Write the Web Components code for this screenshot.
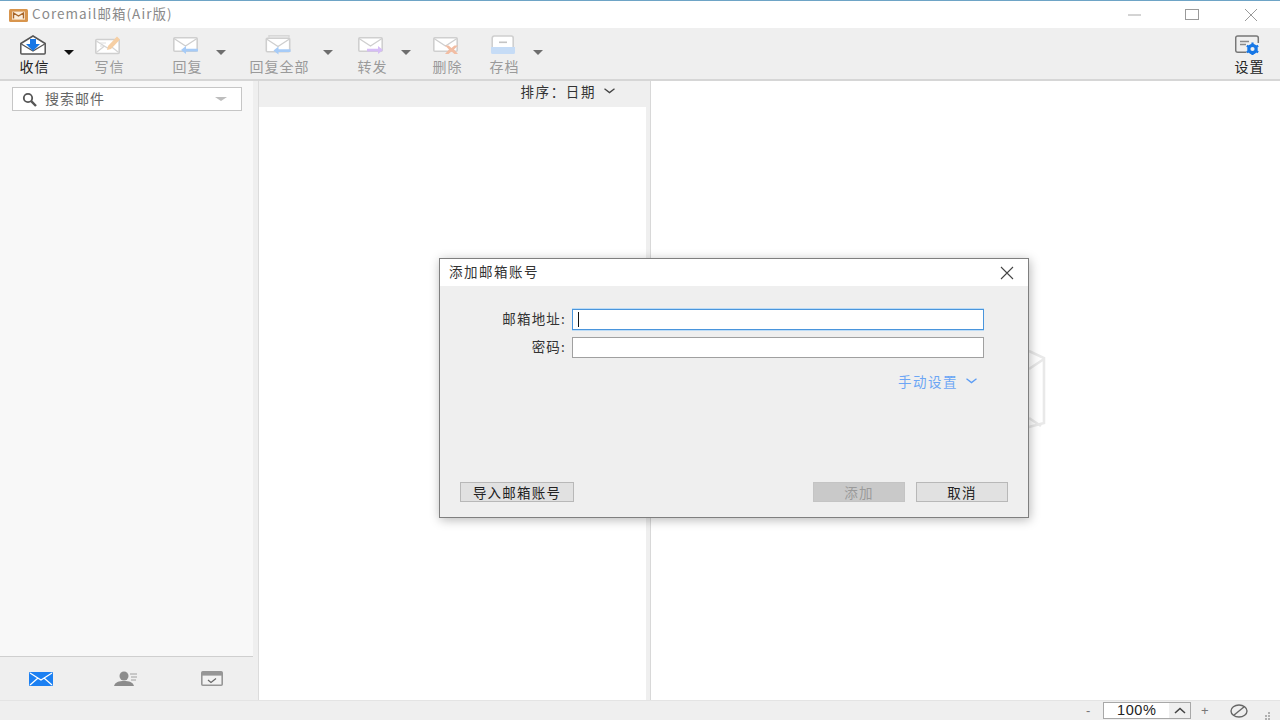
<!DOCTYPE html>
<html lang="zh-CN">
<head>
<meta charset="utf-8">
<title>Coremail邮箱(Air版)</title>
<style>
  html, body { margin: 0; padding: 0; height: 100%; overflow: hidden; background: #fff; }
  body { font-family: "Noto Sans CJK SC", "Liberation Sans", sans-serif; }
</style>
</head>
<body>
<app-window>
  <title-bar slot="title"></title-bar>
  <mail-toolbar slot="toolbar">
    <tool-btn icon="inbox" label="收信" style="margin-left:10px" active></tool-btn>
    <tool-caret style="margin-left:4px" active></tool-caret>
    <tool-btn icon="compose" label="写信" style="margin-left:9px"></tool-btn>
    <tool-btn icon="reply" label="回复" style="margin-left:30px"></tool-btn>
    <tool-caret style="margin-left:3px"></tool-caret>
    <tool-btn icon="replyall" label="回复全部" style="margin-left:19px;width:64px"></tool-btn>
    <tool-caret style="margin-left:10px"></tool-caret>
    <tool-btn icon="forward" label="转发" style="margin-left:13px"></tool-btn>
    <tool-caret style="margin-left:3px"></tool-caret>
    <tool-btn icon="trash" label="删除" style="margin-left:10px"></tool-btn>
    <tool-btn icon="archive" label="存档" style="margin-left:9px"></tool-btn>
    <tool-caret style="margin-left:3px"></tool-caret>
    <tool-btn icon="settings" label="设置" style="margin-left:auto;margin-right:7px" active></tool-btn>
  </mail-toolbar>
  <folder-nav slot="nav"></folder-nav>
  <message-list slot="list"></message-list>
  <reading-pane slot="pane"></reading-pane>
  <status-bar slot="status"></status-bar>
  <account-dialog slot="dialog"></account-dialog>
</app-window>

<script>
const CHEVRON = (w, h, color) => `<svg width="${w}" height="${h}" viewBox="0 0 11 6" fill="none" stroke="${color}" stroke-width="1.3"><path d="M.5 .8 5.5 4.6 10.5 .8"/></svg>`;

const ENVELOPE = `<rect x=".8" y="2.8" width="23.4" height="13.5" rx="1" fill="#fff" stroke="#cfcfcf" stroke-width="1.6"/><path d="M1 3.5 12.5 11 24 3.5" fill="none" stroke="#cfcfcf" stroke-width="1.4"/>`;
const REPLY_ARROW = `<path d="M8 15 13 11V13.7H25V16.5H13V19z" fill="#a6cbf7"/>`;

// toolbar icons, 28x20
const ICONS = {
  inbox: `<path d="M.8 8.5 13 1 25.2 8.5V18a1 1 0 0 1-1 1H1.8a1 1 0 0 1-1-1z" fill="#fff" stroke="#555" stroke-width="1.5"/><path d="M1.3 9 13 16 24.7 9" fill="none" stroke="#555" stroke-width="1.2"/><path d="M10 4h6v5h4l-7 7-7-7h4z" fill="#1677e6"/>`,
  compose: `<rect x=".8" y="4.5" width="23.4" height="14" rx="1" fill="#fff" stroke="#cfcfcf" stroke-width="1.6"/><path d="M1.3 17.5 9.5 11M23.7 17.5 15.5 11M1.3 6 12.5 13 18 9.5" fill="none" stroke="#d5d5d5" stroke-width="1.3"/><path d="M5 8h6M5 11h3" stroke="#ddd" stroke-width="1.2"/><path d="M13 11 22 1.5l3 3-9 9.5-4 1z" fill="#f6cfa4"/>`,
  reply: `${ENVELOPE}${REPLY_ARROW}`,
  replyall: `<path d="M4 2.5V.8H24V2.5" fill="none" stroke="#d8d8d8" stroke-width="1.4"/><g transform="translate(.5 .5)">${ENVELOPE}${REPLY_ARROW}</g>`,
  forward: `${ENVELOPE}<path d="M25 15 20 11V13.7H9V16.5H20V19z" fill="#d6bdf6"/>`,
  trash: `${ENVELOPE}<path d="M12 10.5h3.5l3 2.5 3-2.5H25l-4 4 4 4.5h-3.5l-3-2.5-3 2.5H12l4-4.5z" fill="#f2bda3"/>`,
  archive: `<path d="M2.2 12V3a2 2 0 0 1 2-2h17a2 2 0 0 1 2 2v9" fill="#fff" stroke="#cfcfcf" stroke-width="1.6"/><path d="M1 12H25V17.5a1.5 1.5 0 0 1-1.5 1.5H2.5A1.5 1.5 0 0 1 1 17.5z" fill="#c6dcf6"/><rect x="9" y="6.5" width="8" height="1.6" fill="#c4c4c4"/>`,
  settings: `<path d="M11.5 17.2H2.7a2 2 0 0 1-2-2V3a2 2 0 0 1 2-2h18.6a2 2 0 0 1 2 2v5" fill="none" stroke="#777" stroke-width="1.5"/><path d="M5 6.5h9M5 9.5h6" stroke="#8a8a8a" stroke-width="1.3"/><circle cx="17.5" cy="14" r="3.7" fill="none" stroke="#1677e6" stroke-width="3.2"/><path d="M17.5 7.5v2M17.5 18.5v2M11.8 10.7l1.8 1M21.4 16.3l1.8 1M11.8 17.3l1.8-1M21.4 11.7l1.8-1" stroke="#1677e6" stroke-width="2.2"/>`
};

class AppWindow extends HTMLElement {
  constructor() {
    super();
    this.attachShadow({ mode: 'open' });
    this.shadowRoot.innerHTML = `
      <style>
        :host { display: flex; flex-direction: column; position: relative; width: 1280px; height: 720px; overflow: hidden; background: #fff; }
        .main { flex: 1; display: flex; min-height: 0; }
      </style>
      <slot name="title"></slot>
      <slot name="toolbar"></slot>
      <div class="main">
        <slot name="nav"></slot>
        <slot name="list"></slot>
        <slot name="pane"></slot>
      </div>
      <slot name="status"></slot>
      <slot name="dialog"></slot>
    `;
  }
}

class TitleBar extends HTMLElement {
  constructor() {
    super();
    this.attachShadow({ mode: 'open' });
    this.shadowRoot.innerHTML = `
      <style>
        :host { display: flex; align-items: center; height: 27px; background: #fff; border-top: 1px solid #6ea4c6; padding-left: 9px; }
        .logo { width: 19px; height: 13px; margin-right: 4px; margin-top: 1px; }
        .name { font-size: 13.5px; letter-spacing: 1.05px; color: #8a8a8a; white-space: nowrap; margin-top: -3px; }
        .controls { margin-left: auto; display: flex; align-items: center; }
        .controls svg { display: block; }
      </style>
      <svg class="logo" viewBox="0 0 19 13"><rect width="19" height="13" rx="1.5" fill="#d8954d"/><rect x="3" y="2.6" width="13" height="8" fill="#fbeedd"/><path d="M4.5 9.5V4l5 3 5-3v5.5" fill="none" stroke="#a8662a" stroke-width="1.4"/></svg>
      <span class="name">Coremail邮箱(Air版)</span>
      <div class="controls">
        <svg width="16" height="16" viewBox="0 0 16 16" style="margin-right:42px"><path d="M1 8H14" stroke="#a8a8a8"/></svg>
        <svg width="14" height="14" viewBox="0 0 14 14" style="margin-right:45px"><rect x=".5" y="1.5" width="13" height="10" fill="none" stroke="#9a9a9a"/></svg>
        <svg width="14" height="14" viewBox="0 0 14 14" style="margin-right:22px"><path d="M1 1 13 13M13 1 1 13" stroke="#9a9a9a"/></svg>
      </div>
    `;
  }
}

class MailToolbar extends HTMLElement {
  constructor() {
    super();
    this.attachShadow({ mode: 'open' });
    this.shadowRoot.innerHTML = `
      <style>
        :host { display: flex; align-items: flex-start; height: 51px; background: #efefef; border-bottom: 2px solid #d6d6d6; box-sizing: content-box; }
      </style>
      <slot></slot>
    `;
  }
}

class ToolBtn extends HTMLElement {
  connectedCallback() {
    if (this.shadowRoot) return;
    this.attachShadow({ mode: 'open' });
    const label = this.getAttribute('label');
    const icon = ICONS[this.getAttribute('icon')];
    this.shadowRoot.innerHTML = `
      <style>
        :host { display: flex; flex-direction: column; align-items: center; width: 48px; padding-top: 7px; flex: none; }
        svg { display: block; width: 28px; height: 20px; }
        .label { margin-top: 2px; padding-left: 1px; font-size: 14px; letter-spacing: 1px; line-height: 18px; color: #9a9a9a; white-space: nowrap; }
        :host([active]) .label { color: #222; }
      </style>
      <svg viewBox="0 0 28 20">${icon}</svg>
      <span class="label">${label}</span>
    `;
  }
}

class ToolCaret extends HTMLElement {
  constructor() {
    super();
    this.attachShadow({ mode: 'open' });
    this.shadowRoot.innerHTML = `
      <style>
        :host { display: block; flex: none; width: 14px; height: 5px; margin-top: 22px; }
        i { display: block; width: 0; margin: 0 auto; border: 5px solid transparent; border-top: 5px solid #6e6e6e; border-bottom: 0; }
        :host([active]) i { border-top-color: #111; }
      </style>
      <i></i>
    `;
  }
}

class SearchBox extends HTMLElement {
  constructor() {
    super();
    this.attachShadow({ mode: 'open' });
    this.shadowRoot.innerHTML = `
      <style>
        :host { display: flex; align-items: center; height: 22px; background: #fff; border: 1px solid #c6c6c6; padding: 0 14px 0 9px; }
        svg { flex: none; }
        span { margin-left: 8px; margin-top: -2px; font-size: 14px; letter-spacing: 1px; color: #666; white-space: nowrap; }
        i { margin-left: auto; border: 6px solid transparent; border-top: 4px solid #bdbdbd; border-bottom: 0; }
      </style>
      <svg width="15" height="15" viewBox="0 0 15 15" fill="none" stroke="#555"><circle cx="6" cy="6" r="4.2" stroke-width="1.8"/><path d="M9.2 9.2 14 14" stroke-width="2.4"/></svg>
      <span>搜索邮件</span>
      <i></i>
    `;
  }
}

class FolderNav extends HTMLElement {
  constructor() {
    super();
    this.attachShadow({ mode: 'open' });
    this.shadowRoot.innerHTML = `
      <style>
        :host { display: flex; flex-direction: column; width: 253px; background: #f8f8f8; border-right: 5px solid #efefef; box-sizing: content-box; flex: none; }
        .top { flex: 1; padding: 6px 11px 0 12px; }
        .tabs { height: 43px; display: flex; align-items: center; background: #efefef; border-top: 1px solid #cfcfcf; }
        .tab { flex: none; display: flex; justify-content: center; }
      </style>
      <div class="top"><search-box></search-box></div>
      <div class="tabs">
        <div class="tab" style="width:82px">
          <svg width="24" height="14" viewBox="0 0 24 14"><rect width="24" height="14" rx="1" fill="#1c80f2"/><path d="M1 1 12 8 23 1M1 13 9 6M23 13 15 6" fill="none" stroke="#fff" stroke-width="1.2"/></svg>
        </div>
        <div class="tab" style="width:88px">
          <svg width="24" height="16" viewBox="0 0 24 16"><circle cx="10" cy="5" r="4.5" fill="#8c8c8c"/><path d="M0 15c1-4 5-5 10-5s9 1 10 5z" fill="#8c8c8c"/><path d="M16 3h7M17 6h6M17 9h5" stroke="#a0a0a0"/></svg>
        </div>
        <div class="tab" style="width:84px">
          <svg width="22" height="15" viewBox="0 0 22 15"><rect x=".8" y=".8" width="20.4" height="13.4" rx="1" fill="#f2f2f2" stroke="#969696" stroke-width="1.6"/><rect x="1" y="1" width="20" height="3.6" fill="#969696"/><path d="M7 9 10 11.5 15 7.5" fill="none" stroke="#666" stroke-width="1.2"/></svg>
        </div>
      </div>
    `;
  }
}

class MessageList extends HTMLElement {
  constructor() {
    super();
    this.attachShadow({ mode: 'open' });
    this.shadowRoot.innerHTML = `
      <style>
        :host { display: flex; flex-direction: column; width: 393px; flex: none; background: #efefef; border-left: 1px solid #dcdcdc; box-sizing: border-box; border-right: 1px solid #d8d8d8; }
        .sort { height: 20px; padding-bottom: 6px; display: flex; align-items: center; justify-content: flex-end; padding-right: 35px; font-size: 13.5px; letter-spacing: 1.6px; color: #333; white-space: nowrap; }
        .sort svg { margin-left: 8px; }
        .body { flex: 1; background: #fff; margin-right: 4px; }
      </style>
      <div class="sort">排序：日期${CHEVRON(11, 6, '#444')}</div>
      <div class="body"></div>
    `;
  }
}

class ReadingPane extends HTMLElement {
  constructor() {
    super();
    this.attachShadow({ mode: 'open' });
    this.shadowRoot.innerHTML = `
      <style>
        :host { display: flex; flex: 1; align-items: center; justify-content: center; background: #fff; }
      </style>
      <svg width="160" height="82" viewBox="0 0 160 82" fill="none" stroke="#e9e9e9" stroke-width="2.6">
        <path d="M17 1 2 8V73L17 77H143L158 73V8L143 1z"/>
        <path d="M158 9 143 19M143 68 155 76M2 9 17 19M17 68 5 76"/>
      </svg>
    `;
  }
}

class StatusBar extends HTMLElement {
  constructor() {
    super();
    this.attachShadow({ mode: 'open' });
    this.shadowRoot.innerHTML = `
      <style>
        :host { display: flex; align-items: center; height: 19px; background: #efefef; border-top: 1px solid #e4e4e4; font-family: "Liberation Sans", sans-serif; color: #555; }
        .minus { margin-left: 1086px; width: 6px; font-size: 13px; color: #777; }
        .zoom { margin-left: 11px; width: 86px; height: 15px; display: flex; background: #fff; border: 1px solid #a8a8a8; }
        .val { width: 65px; padding-left: 13px; box-sizing: border-box; font-size: 14.5px; line-height: 15px; letter-spacing: .6px; color: #222; }
        .up { flex: 1; background: #efefef; display: flex; align-items: center; justify-content: center; }
        .plus { margin-left: 10px; font-size: 13px; color: #777; width: 8px; }
        .block { margin-left: 21px; display: block; }
        .grip { margin-left: 15px; display: block; align-self: flex-end; }
      </style>
      <span class="minus">-</span>
      <div class="zoom">
        <div class="val">100%</div>
        <div class="up"><svg width="12" height="7" viewBox="0 0 12 7" fill="none" stroke="#444" stroke-width="1.6"><path d="M1 6 6 1.5 11 6"/></svg></div>
      </div>
      <span class="plus">+</span>
      <svg class="block" width="18" height="14" viewBox="0 0 18 14" fill="none" stroke="#666" stroke-width="1.4"><ellipse cx="9" cy="7" rx="8" ry="6"/><path d="M3.5 11.5 14.5 2.5"/></svg>
      <svg class="grip" width="8" height="9" viewBox="0 0 8 9" fill="#b0b0b0"><rect x="5" y="1" width="2" height="2"/><rect x="5" y="4" width="2" height="2"/><rect x="5" y="7" width="2" height="2"/><rect x="2" y="4" width="2" height="2"/><rect x="2" y="7" width="2" height="2"/></svg>
    `;
  }
}

class DialogField extends HTMLElement {
  connectedCallback() {
    if (this.shadowRoot) return;
    this.attachShadow({ mode: 'open' });
    this.shadowRoot.innerHTML = `
      <style>
        :host { display: flex; align-items: center; height: 21px; }
        label { width: 126px; margin-top: -3px; text-align: right; font-size: 13.5px; letter-spacing: 1.2px; color: #333; white-space: nowrap; }
        .box { margin-left: 6px; width: 405px; height: 19px; background: #fff; border: 1px solid #a0a0a0; display: flex; align-items: center; padding-left: 5px; box-sizing: content-box; }
        :host([focused]) .box { border-color: #4a95dc; box-shadow: 0 -1px 0 #bcdcf7, 0 1px 0 #bcdcf7; }
        .caret { display: none; width: 1px; height: 15px; background: #111; }
        :host([focused]) .caret { display: block; }
      </style>
      <label>${this.getAttribute('label')}</label>
      <div class="box"><i class="caret"></i></div>
    `;
  }
}

class AccountDialog extends HTMLElement {
  constructor() {
    super();
    this.attachShadow({ mode: 'open' });
    this.shadowRoot.innerHTML = `
      <style>
        :host { position: absolute; left: 439px; top: 258px; width: 588px; height: 258px; display: flex; flex-direction: column; background: #efefef; border: 1px solid #7f7f7f; box-shadow: 1px 2px 10px rgba(0,0,0,.28); }
        .head { flex: none; height: 27px; background: #fff; display: flex; align-items: center; justify-content: space-between; padding: 0 14px 0 9px; }
        .head span { font-size: 13.5px; letter-spacing: 1.5px; color: #333; white-space: nowrap; margin-top: -3px; }
        .body { flex: 1; display: flex; flex-direction: column; padding-top: 23px; }
        .fields { display: flex; flex-direction: column; gap: 7px; }
        .manual { display: flex; align-items: center; justify-content: flex-end; margin-top: 13px; padding-right: 51px; font-size: 13.5px; letter-spacing: 1.5px; color: #6ca6f5; white-space: nowrap; }
        .manual svg { margin-left: 8px; }
        .foot { margin-top: auto; display: flex; padding: 0 20px 15px 20px; }
        button { font: inherit; font-size: 13.5px; letter-spacing: 1.2px; height: 17px; padding: 0 0 1px; box-sizing: content-box; border: 1px solid #b8b8b8; background: #e1e1e1; color: #222; display: flex; align-items: center; justify-content: center; white-space: nowrap; }
        .import { width: 112px; }
        .add { margin-left: auto; width: 90px; background: #c9c9c9; border-color: #c4c4c4; color: #9a9a9a; }
        .cancel { margin-left: 11px; width: 90px; }
      </style>
      <div class="head">
        <span>添加邮箱账号</span>
        <svg width="14" height="14" viewBox="0 0 14 14"><path d="M1 1 13 13M13 1 1 13" stroke="#444" stroke-width="1.1"/></svg>
      </div>
      <div class="body">
        <div class="fields">
          <dialog-field label="邮箱地址:" focused></dialog-field>
          <dialog-field label="密码:"></dialog-field>
        </div>
        <div class="manual">手动设置${CHEVRON(11, 6, '#5b9cf5')}</div>
        <div class="foot">
          <button class="import">导入邮箱账号</button>
          <button class="add">添加</button>
          <button class="cancel">取消</button>
        </div>
      </div>
    `;
  }
}

customElements.define('tool-btn', ToolBtn);
customElements.define('tool-caret', ToolCaret);
customElements.define('mail-toolbar', MailToolbar);
customElements.define('title-bar', TitleBar);
customElements.define('search-box', SearchBox);
customElements.define('folder-nav', FolderNav);
customElements.define('message-list', MessageList);
customElements.define('reading-pane', ReadingPane);
customElements.define('status-bar', StatusBar);
customElements.define('dialog-field', DialogField);
customElements.define('account-dialog', AccountDialog);
customElements.define('app-window', AppWindow);
</script>
</body>
</html>
